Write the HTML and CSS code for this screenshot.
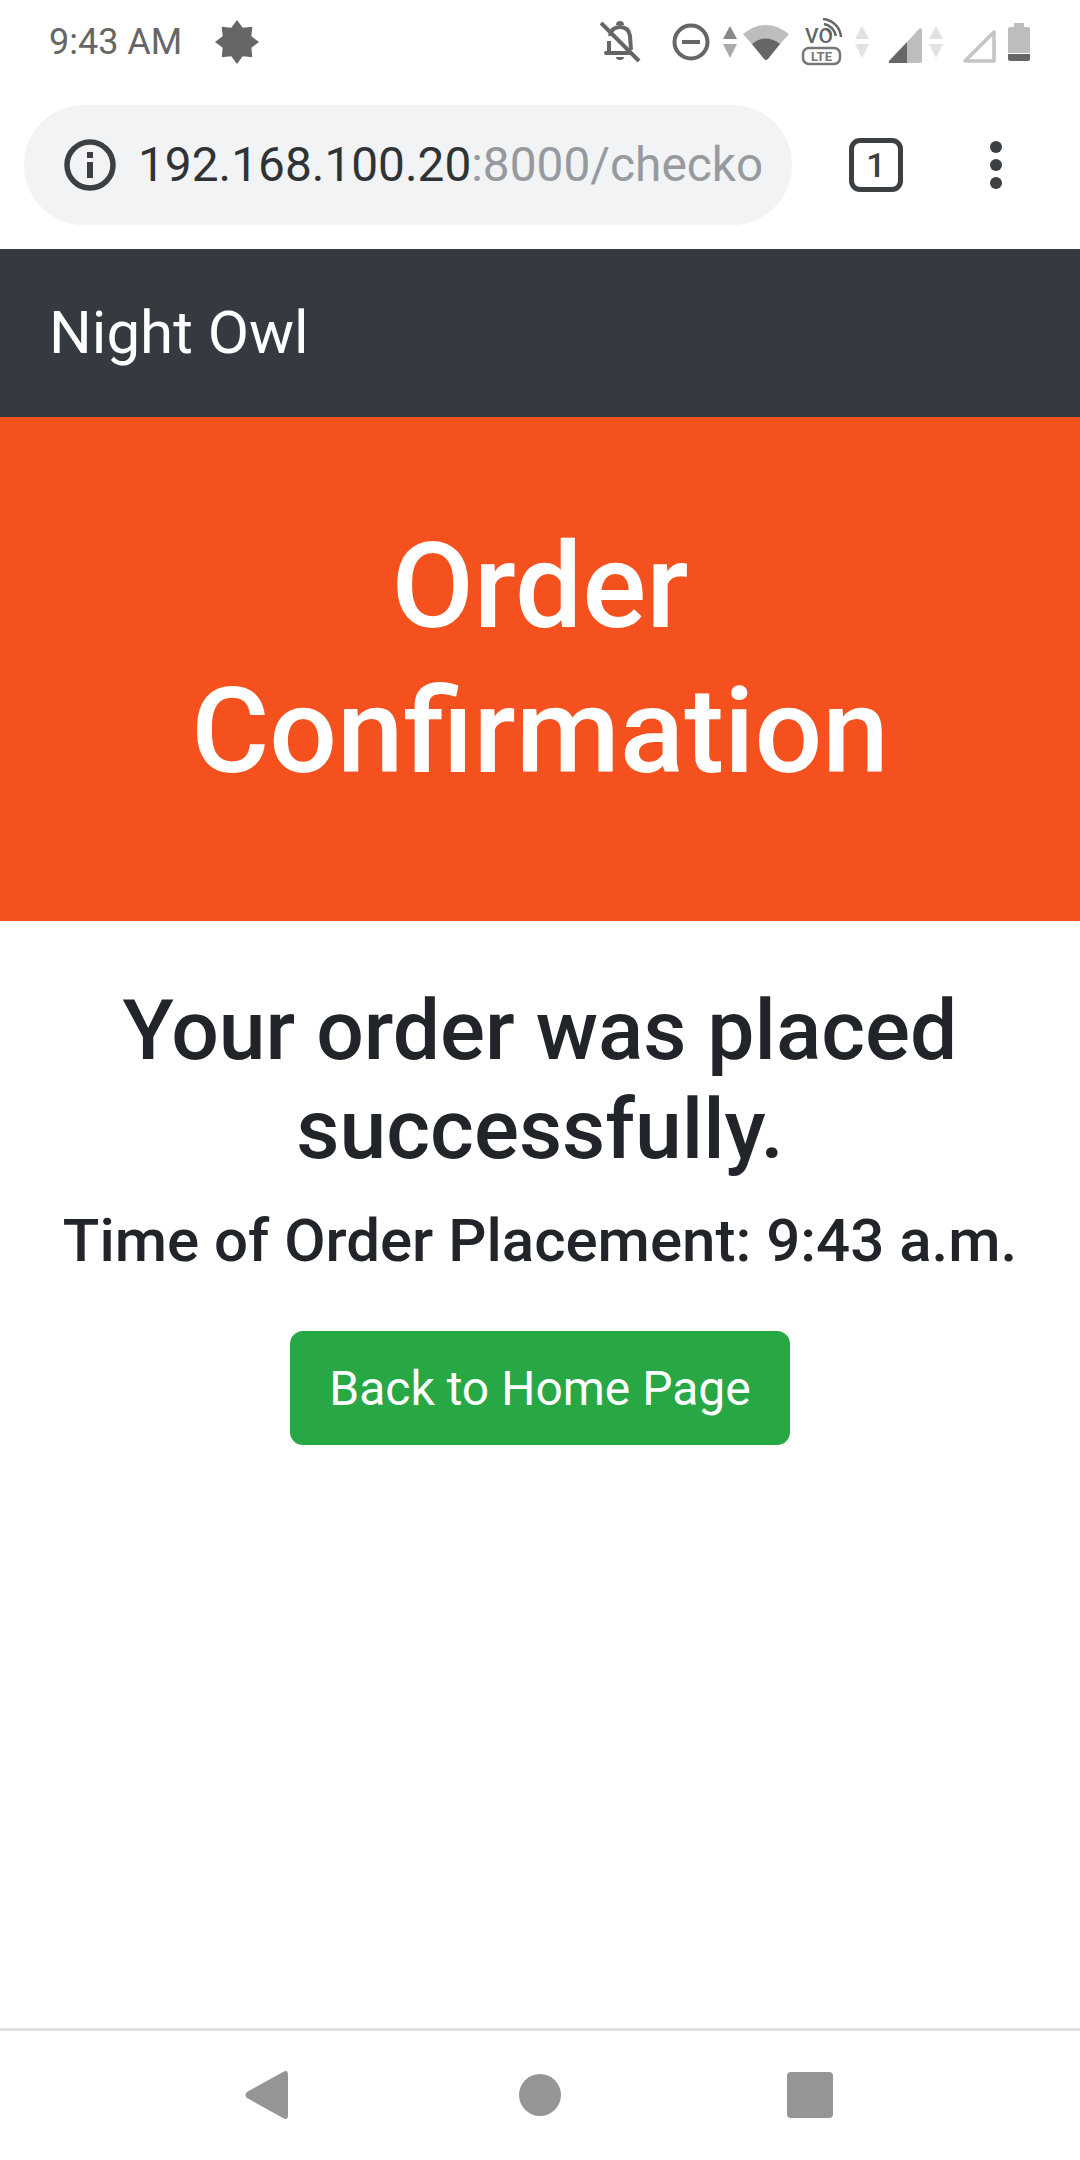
FILE: index.html
```html
<!DOCTYPE html>
<html lang="en">

<head>
    <meta charset="UTF-8">
    <meta name="viewport" content="width=device-width, initial-scale=1.0">
    <title>Order Confirmation</title>
    <link rel="stylesheet" href="styles.css">
</head>

<body>
    <div class="phone">
        <div class="status-bar">
            <span class="clock">9:43 AM</span>
            <svg class="star" width="44" height="44" viewBox="0 0 46 46">
                <polygon fill="#666" points="23,0 29,8 39,7 38,17 46,23 38,29 39,39 29,38 23,46 17,38 7,39 8,29 0,23 8,17 7,7 17,8" />
            </svg>
            <div class="status-icons">
                <svg width="42" height="42" viewBox="0 0 42 42" fill="none" stroke="#666">
                    <path stroke-width="4" d="M10 15c1-6 5-9 10-9s9 3 10 9l1 14M9 20v12h17" />
                    <path stroke-width="4" stroke-linecap="round" d="M6 32h24" />
                    <path stroke-width="4" d="M1 2l38 38" />
                    <path fill="#666" stroke="none" d="M16 4a4 4 0 0 1 8 0zM16 36h8a4 3 0 0 1-8 0z" />
                </svg>
                <svg class="ic-minus" width="38" height="38" viewBox="0 0 38 38" fill="none" stroke="#666">
                    <circle cx="19" cy="19" r="16.5" stroke-width="4" />
                    <path stroke-width="4" d="M10 19h18" />
                </svg>
                <svg class="ic-arrows" width="14" height="32" viewBox="0 0 14 32">
                    <polygon fill="#888" points="7,0 14,13 0,13" />
                    <polygon fill="#aaa" points="0,18 14,18 7,32" />
                </svg>
                <svg class="ic-wifi" width="46" height="36" viewBox="0 0 46 36">
                    <path fill="#bdbdbd" d="M0 10Q23-8 46 10L23 36z" />
                    <path fill="#666" d="M9 20Q23 9 37 20L25 35q-2 2-4 0z" />
                </svg>
                <svg class="ic-volte" width="42" height="48" viewBox="0 0 42 48">
                    <text class="volte-vo" x="4" y="25">VO</text>
                    <path fill="none" stroke="#666" stroke-width="2.5" d="M22 1c10 1 17 8 18 18M23 6c6 1 11 6 12 12M25 11c3 1 4 3 5 6" />
                    <rect x="2" y="30" width="37" height="16" rx="6" fill="none" stroke="#777" stroke-width="2.5" />
                    <text class="volte-lte" x="20.500" y="43" text-anchor="middle">LTE</text>
                </svg>
                <svg class="ic-arrows-far" width="14" height="32" viewBox="0 0 14 32">
                    <polygon fill="#e2e2e2" points="7,0 14,13 0,13" />
                    <polygon fill="#e2e2e2" points="0,18 14,18 7,32" />
                </svg>
                <svg class="ic-signal" width="34" height="35" viewBox="0 0 34 35">
                    <path fill="#bdbdbd" d="M19 14L31 1q3-2 3 2v30q0 2-2 2H19z" />
                    <path fill="#666" d="M19 14v21H2q-2 0-1-2z" />
                </svg>
                <svg class="ic-arrows-near" width="14" height="32" viewBox="0 0 14 32">
                    <polygon fill="#e2e2e2" points="7,0 14,13 0,13" />
                    <polygon fill="#e2e2e2" points="0,18 14,18 7,32" />
                </svg>
                <svg class="ic-signal-empty" width="34" height="35" viewBox="0 0 34 35">
                    <path fill="none" stroke="#c4c4c4" stroke-width="3.500" stroke-linejoin="round" d="M32 4v29H3z" />
                </svg>
                <svg class="ic-battery" width="22" height="38" viewBox="0 0 22 38">
                    <path fill="#bdbdbd" d="M6 0h10v4h4q2 0 2 2v24H0V6q0-2 2-2h4z" />
                    <path fill="#666" d="M0 31h22v5q0 2-2 2H2q-2 0-2-2z" />
                </svg>
            </div>
        </div>

        <div class="toolbar">
            <div class="url-bar">
                <svg class="info-icon" width="52" height="52" viewBox="0 0 52 52">
                    <circle cx="26" cy="26" r="23" fill="none" stroke="#3c4043" stroke-width="5.500" />
                    <rect x="23" y="23" width="6" height="16" fill="#3c4043" />
                    <rect x="23" y="13" width="6" height="6" fill="#3c4043" />
                </svg>
                <div class="url-text"><span class="url-host">192.168.100.20</span>:8000/checko</div>
            </div>
            <div class="tab-count">1</div>
            <div class="menu-dots">
                <span></span>
                <span></span>
                <span></span>
            </div>
        </div>

        <nav class="navbar">Night Owl</nav>

        <header class="jumbotron">
            <h1>Order<br>Confirmation</h1>
        </header>

        <main class="content">
            <h2>Your order was placed successfully.</h2>
            <h4>Time of Order Placement: 9:43 a.m.</h4>
            <a class="btn-home" href="#">Back to Home Page</a>
        </main>

        <div class="nav-buttons">
            <svg width="44" height="48" viewBox="0 0 44 48">
                <path fill="#959595" d="M38 1q5-3 5 3v40q0 6-5 3L2 27q-3-3 0-6z" />
            </svg>
            <div class="nav-home"></div>
            <div class="nav-recent"></div>
        </div>
    </div>
</body>

</html>
```

FILE: styles.css
```css
* {
    box-sizing: border-box;
}

body {
    margin: 0;
    font-family: Roboto, "Liberation Sans", sans-serif;
    background: #fff;
}

.phone {
    width: 1080px;
    height: 2160px;
    display: flex;
    flex-direction: column;
    overflow: hidden;
}

.status-bar {
    height: 84px;
    display: flex;
    align-items: center;
    padding: 0 50px 0 49px;
    flex-shrink: 0;
}

.clock {
    font-size: 36px;
    color: #666;
    width: 166px;
}

.status-icons {
    margin-left: auto;
    display: flex;
    align-items: center;
}

.ic-minus {
    margin-left: 30px;
}

.ic-arrows {
    margin-left: 13px;
}

.ic-wifi {
    margin-left: 6px;
}

.ic-volte {
    margin-left: 12px;
}

.ic-arrows-far {
    margin-left: 12px;
}

.ic-signal {
    margin-left: 19px;
    margin-top: 6px;
}

.ic-arrows-near {
    margin-left: 7px;
}

.ic-signal-empty {
    margin-left: 19px;
    margin-top: 6px;
}

.ic-battery {
    margin-left: 12px;
}

.volte-vo {
    font-size: 21px;
    font-weight: 500;
    fill: #666;
}

.volte-lte {
    font-size: 13px;
    font-weight: 700;
    fill: #777;
}

.toolbar {
    height: 165px;
    flex-shrink: 0;
    display: flex;
    align-items: flex-start;
    padding: 21px 0 0 24px;
}

.url-bar {
    width: 768px;
    height: 120px;
    border-radius: 60px;
    background: #f1f3f4;
    display: flex;
    align-items: center;
    padding-left: 40px;
}

.info-icon {
    flex-shrink: 0;
}

.url-text {
    margin-left: 22px;
    width: 623px;
    white-space: nowrap;
    overflow: hidden;
    font-size: 47.800px;
    color: #969a9e;
}

.url-host {
    color: #303336;
}

.tab-count {
    width: 54px;
    height: 54px;
    margin: 33px 0 0 57px;
    border: 5.5px solid #3c4043;
    border-radius: 11px;
    display: flex;
    align-items: center;
    justify-content: center;
    font-size: 34px;
    font-weight: 500;
    color: #3c4043;
}

.menu-dots {
    width: 12px;
    margin: 36px 0 0 87px;
    display: flex;
    flex-direction: column;
    gap: 6px;
}

.menu-dots span {
    width: 12px;
    height: 12px;
    border-radius: 50%;
    background: #3c4043;
}

.navbar {
    height: 168px;
    flex-shrink: 0;
    background: #343a40;
    color: #fff;
    font-size: 60px;
    display: flex;
    align-items: center;
    padding: 0 0 2px 49px;
}

.jumbotron {
    height: 504px;
    flex-shrink: 0;
    background: #f4511e;
    color: #fff;
    text-align: center;
    padding-top: 97px;
}

h1 {
    margin: 0;
    font-size: 119.500px;
    line-height: 145px;
    font-weight: 500;
}

.content {
    flex: 1;
    display: flex;
    flex-direction: column;
    align-items: center;
    text-align: center;
    padding: 60px 44px 0;
    color: #212529;
}

h2 {
    margin: 0 0 26px;
    font-size: 84px;
    line-height: 99px;
    font-weight: 500;
}

h4 {
    margin: 0 0 54px;
    font-size: 60px;
    line-height: 72px;
    font-weight: 500;
    white-space: nowrap;
}

.btn-home {
    display: block;
    width: 500px;
    height: 114px;
    line-height: 116px;
    background: #28a745;
    color: #fff;
    font-size: 48px;
    border-radius: 13px;
    text-decoration: none;
}

.nav-buttons {
    height: 132px;
    flex-shrink: 0;
    border-top: 3px solid #e0e0e0;
    display: flex;
    align-items: center;
    padding: 0 0 2px 245px;
}

.nav-home {
    width: 42px;
    height: 42px;
    margin-left: 230px;
    border-radius: 50%;
    background: #959595;
}

.nav-recent {
    width: 46px;
    height: 46px;
    margin-left: 226px;
    border-radius: 4px;
    background: #959595;
}
```
